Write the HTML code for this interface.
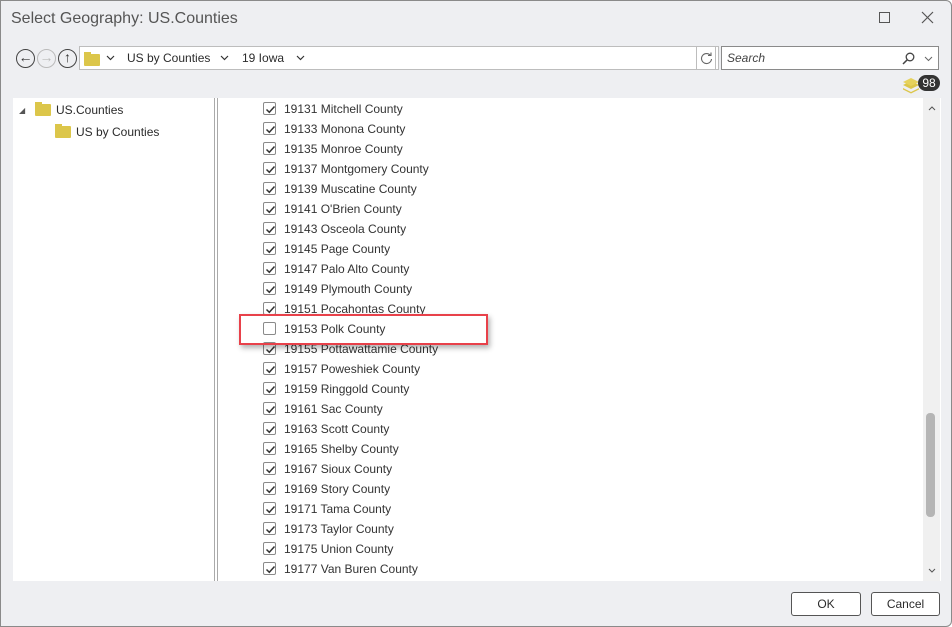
<!DOCTYPE html>
<html><head><meta charset="utf-8"><style>
*{box-sizing:border-box;margin:0;padding:0}
body{width:952px;height:627px;overflow:hidden;background:#fff;font-family:"Liberation Sans",sans-serif;font-size:12px;color:#2b2b2b}
.win{position:absolute;left:0;top:0;width:952px;height:627px;background:#eeeff2;border:1px solid #8a8a8a;border-radius:0 6px 6px 0}
.title{position:absolute;left:10px;top:9px;font-size:16px;color:#555}
.abs{position:absolute}
.circ{position:absolute;top:48px;width:19px;height:19px;border:1.6px solid #444;border-radius:50%;font-size:14px;font-weight:bold;line-height:15px;text-align:center;color:#333}
.bar{position:absolute;left:78px;top:45px;width:640px;height:24px;background:#fff;border:1px solid #bdbdbd}
.folder{position:absolute;width:16px;height:12px;background:#dcc64a;border-radius:1px}
.folder:before{content:"";position:absolute;left:0;top:-2px;width:7px;height:3px;background:#dcc64a}
.panel{position:absolute;left:12px;top:97px;width:928px;height:483px;background:#fff}
.row{position:absolute;left:262px;height:20px;line-height:20px}
.cb{position:absolute;left:0;top:3px;width:13px;height:13px;border:1px solid #8a8a8a;border-radius:2px;background:#fff}
.cb svg{position:absolute;left:1px;top:1px}
.row span{position:absolute;left:21px;top:0;white-space:nowrap;font-size:12px;color:#333}
.btn{position:absolute;top:591px;height:24px;border:1px solid #555;border-radius:3px;background:#fff;text-align:center;line-height:22px;font-size:12px}
</style></head><body>
<div class="win">
<div class="title">Select Geography: US.Counties</div>
<div class="abs" style="left:878px;top:11px;width:11px;height:11px;border:1px solid #555"></div>
<svg class="abs" style="left:920px;top:10px" width="13" height="13"><path d="M1 1L12 12M12 1L1 12" stroke="#555" stroke-width="1.2"/></svg>
<div class="circ" style="left:15px">&#8592;</div>
<div class="circ" style="left:36px;border-color:#bbb;color:#bbb">&#8594;</div>
<div class="circ" style="left:57px">&#8593;</div>
<div class="bar">
 <div class="folder" style="left:4px;top:7px"></div>
 <svg class="abs" style="left:26px;top:8px" width="9" height="6"><path d="M1 1L4.5 4.5L8 1" stroke="#333" fill="none" stroke-width="1.2"/></svg>
 <div class="abs" style="left:47px;top:4px">US by Counties</div>
 <svg class="abs" style="left:140px;top:8px" width="9" height="6"><path d="M1 1L4.5 4.5L8 1" stroke="#333" fill="none" stroke-width="1.2"/></svg>
 <div class="abs" style="left:162px;top:4px">19 Iowa</div>
 <svg class="abs" style="left:216px;top:8px" width="9" height="6"><path d="M1 1L4.5 4.5L8 1" stroke="#333" fill="none" stroke-width="1.2"/></svg>
</div>
<div class="abs" style="left:695px;top:45px;width:20px;height:24px;border:1px solid #bdbdbd;background:#fff"><svg class="abs" style="left:3px;top:5px" width="13" height="13"><path d="M10.5 3.5A5 5 0 1 0 11.5 7" stroke="#666" fill="none" stroke-width="1.1"/><path d="M8 3.5L11 3.5L11 0.5" stroke="#666" fill="none" stroke-width="1.1"/></svg></div>
<div class="abs" style="left:720px;top:45px;width:218px;height:24px;border:1px solid #8a8a8a;background:#fff">
 <div class="abs" style="left:5px;top:4px;font-style:italic;color:#444">Search</div>
 <svg class="abs" style="left:180px;top:5px" width="13" height="13"><circle cx="8" cy="5" r="3.8" stroke="#444" fill="none" stroke-width="1.3"/><path d="M5.2 7.8L1 12" stroke="#444" stroke-width="1.5"/></svg>
 <svg class="abs" style="left:202px;top:9px" width="9" height="6"><path d="M1 1L4.5 4.5L8 1" stroke="#666" fill="none" stroke-width="1"/></svg>
</div>
<svg class="abs" style="left:901px;top:75px" width="20" height="18"><path d="M1 9L9 5L17 9L9 13Z" fill="#dcc64a"/><path d="M1 12L9 16L17 12L17 13.5L9 17.5L1 13.5Z" fill="#dcc64a"/><path d="M1 6L9 2L17 6L9 10Z" fill="#e6d25c"/></svg>
<div class="abs" style="left:917px;top:74px;width:22px;height:16px;border-radius:8px;background:#333;color:#fff;font-size:12px;line-height:16px;text-align:center">98</div>
<div class="panel">
 <div class="abs" style="left:201px;top:0;width:4px;height:483px;border-left:1px solid #aaa;border-right:1px solid #aaa"></div>
 <div class="abs" style="left:6px;top:8px;font-size:8px;color:#555">&#9698;</div>
 <div class="folder" style="left:22px;top:6px"></div>
 <div class="abs" style="left:43px;top:5px">US.Counties</div>
 <div class="folder" style="left:42px;top:28px"></div>
 <div class="abs" style="left:63px;top:27px">US by Counties</div>
 <div class="abs" style="left:910px;top:0;width:17px;height:483px;background:#f0f0f0"></div>
 <svg class="abs" style="left:915px;top:8px" width="8" height="5"><path d="M1 4L4 1L7 4" stroke="#555" fill="none"/></svg>
 <div class="abs" style="left:913px;top:315px;width:9px;height:104px;background:#b5b5b5;border-radius:4px"></div>
 <svg class="abs" style="left:915px;top:470px" width="8" height="5"><path d="M1 1L4 4L7 1" stroke="#555" fill="none"/></svg>
</div>
<div id="rows"></div>
<div class="abs" style="left:238px;top:313px;width:249px;height:31px;border:2px solid #e8414a;box-shadow:2px 3px 5px rgba(0,0,0,.3)"></div>
<div class="btn" style="left:790px;width:70px">OK</div>
<div class="btn" style="left:870px;width:69px">Cancel</div>
</div>
<script>
var n=["19131 Mitchell County","19133 Monona County","19135 Monroe County","19137 Montgomery County","19139 Muscatine County","19141 O'Brien County","19143 Osceola County","19145 Page County","19147 Palo Alto County","19149 Plymouth County","19151 Pocahontas County","19153 Polk County","19155 Pottawattamie County","19157 Poweshiek County","19159 Ringgold County","19161 Sac County","19163 Scott County","19165 Shelby County","19167 Sioux County","19169 Story County","19171 Tama County","19173 Taylor County","19175 Union County","19177 Van Buren County"];
var h="";n.forEach(function(t,i){var c=i==11?"":'<svg width="11" height="11"><path d="M1.5 5.5L4.3 8.3L9.5 2.5" stroke="#333" fill="none" stroke-width="1.5"/></svg>';h+='<div class="row" style="top:'+(98+i*20)+'px"><div class="cb">'+c+'</div><span>'+t+'</span></div>';});
document.getElementById("rows").innerHTML=h;
</script>
</body></html>
